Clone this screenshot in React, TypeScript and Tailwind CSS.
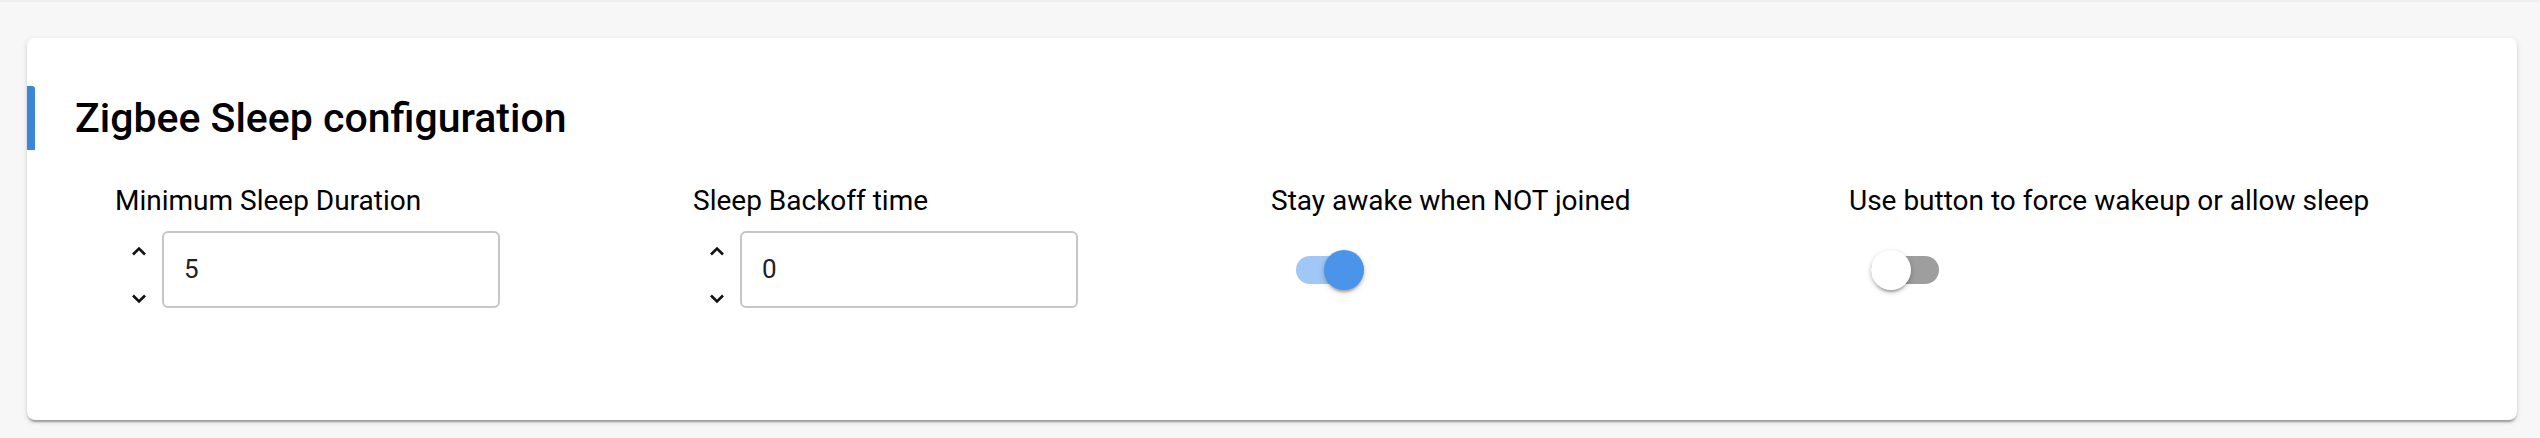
import { useState } from "react";

const Chevron = ({ up }: { up?: boolean }) => (
  <svg width="16" height="10" viewBox="0 0 16 10" fill="none">
    <path
      d={up ? "M2 8.5 L8 2.5 L14 8.5" : "M2 1.5 L8 7.5 L14 1.5"}
      stroke="#111"
      strokeWidth="2.6"
    />
  </svg>
);

const NumberField = ({ label, value }: { label: string; value: string }) => (
  <div className="flex flex-col">
    <label className="text-[28px] leading-[36px] text-black">{label}</label>
    <div className="mt-[12px] flex items-center">
      <div className="flex h-[77px] w-[47px] flex-col items-center justify-center gap-[38px] pt-[10px]">
        <Chevron up />
        <Chevron />
      </div>
      <div className="flex h-[77px] w-[338px] items-center rounded-[6px] border-2 border-[#c6c6c6] px-[20px] text-[26px] text-[#222]">
        {value}
      </div>
    </div>
  </div>
);

const Toggle = ({ label, on, offset }: { label: string; on?: boolean; offset: string }) => {
  const [checked, setChecked] = useState(!!on);
  return (
    <div className="flex flex-col">
      <label className="text-[28px] leading-[36px] text-black">{label}</label>
      <div className="mt-[12px] flex h-[77px] items-center">
        <button
          onClick={() => setChecked(!checked)}
          className={`${offset} flex h-[28px] w-[68px] items-center rounded-full ${
            checked ? "justify-end bg-[#a0c7f5]" : "justify-start bg-[#9e9e9e]"
          }`}
        >
          <span
            className={`h-[40px] w-[40px] rounded-full shadow-[0_4px_2px_-2px_rgba(0,0,0,0.2),0_2px_4px_0_rgba(0,0,0,0.14),0_2px_6px_0_rgba(0,0,0,0.12)] ${
              checked ? "bg-[#4a94ea]" : "bg-white"
            }`}
          />
        </button>
      </div>
    </div>
  );
};

export default function App() {
  return (
    <div className="min-h-[438px] bg-[#f7f7f7] font-['Roboto',sans-serif]">
      <div className="h-[2px] bg-[#efefef]" />
      <div className="pl-[27px] pr-[23px] pt-[36px]">
        <section className="h-[382px] rounded-[8px] bg-white shadow-[0_4px_2px_-2px_rgba(0,0,0,0.2),0_2px_2px_0_rgba(0,0,0,0.14),0_2px_6px_0_rgba(0,0,0,0.12)]">
          <div className="flex pt-[48px]">
            <div className="h-[64px] w-[8px] rounded-tr-[3px] bg-[#3b86d8]" />
            <h2 className="pl-[40px] text-[41px] font-medium leading-[64px] text-black">
              Zigbee Sleep configuration
            </h2>
          </div>
          <div className="mt-[33px] grid grid-cols-[578px_578px_578px_578px] pl-[88px]">
            <NumberField label="Minimum Sleep Duration" value="5" />
            <NumberField label="Sleep Backoff time" value="0" />
            <Toggle label="Stay awake when NOT joined" on offset="ml-[25px]" />
            <Toggle label="Use button to force wakeup or allow sleep" offset="ml-[22px]" />
          </div>
        </section>
      </div>
    </div>
  );
}
